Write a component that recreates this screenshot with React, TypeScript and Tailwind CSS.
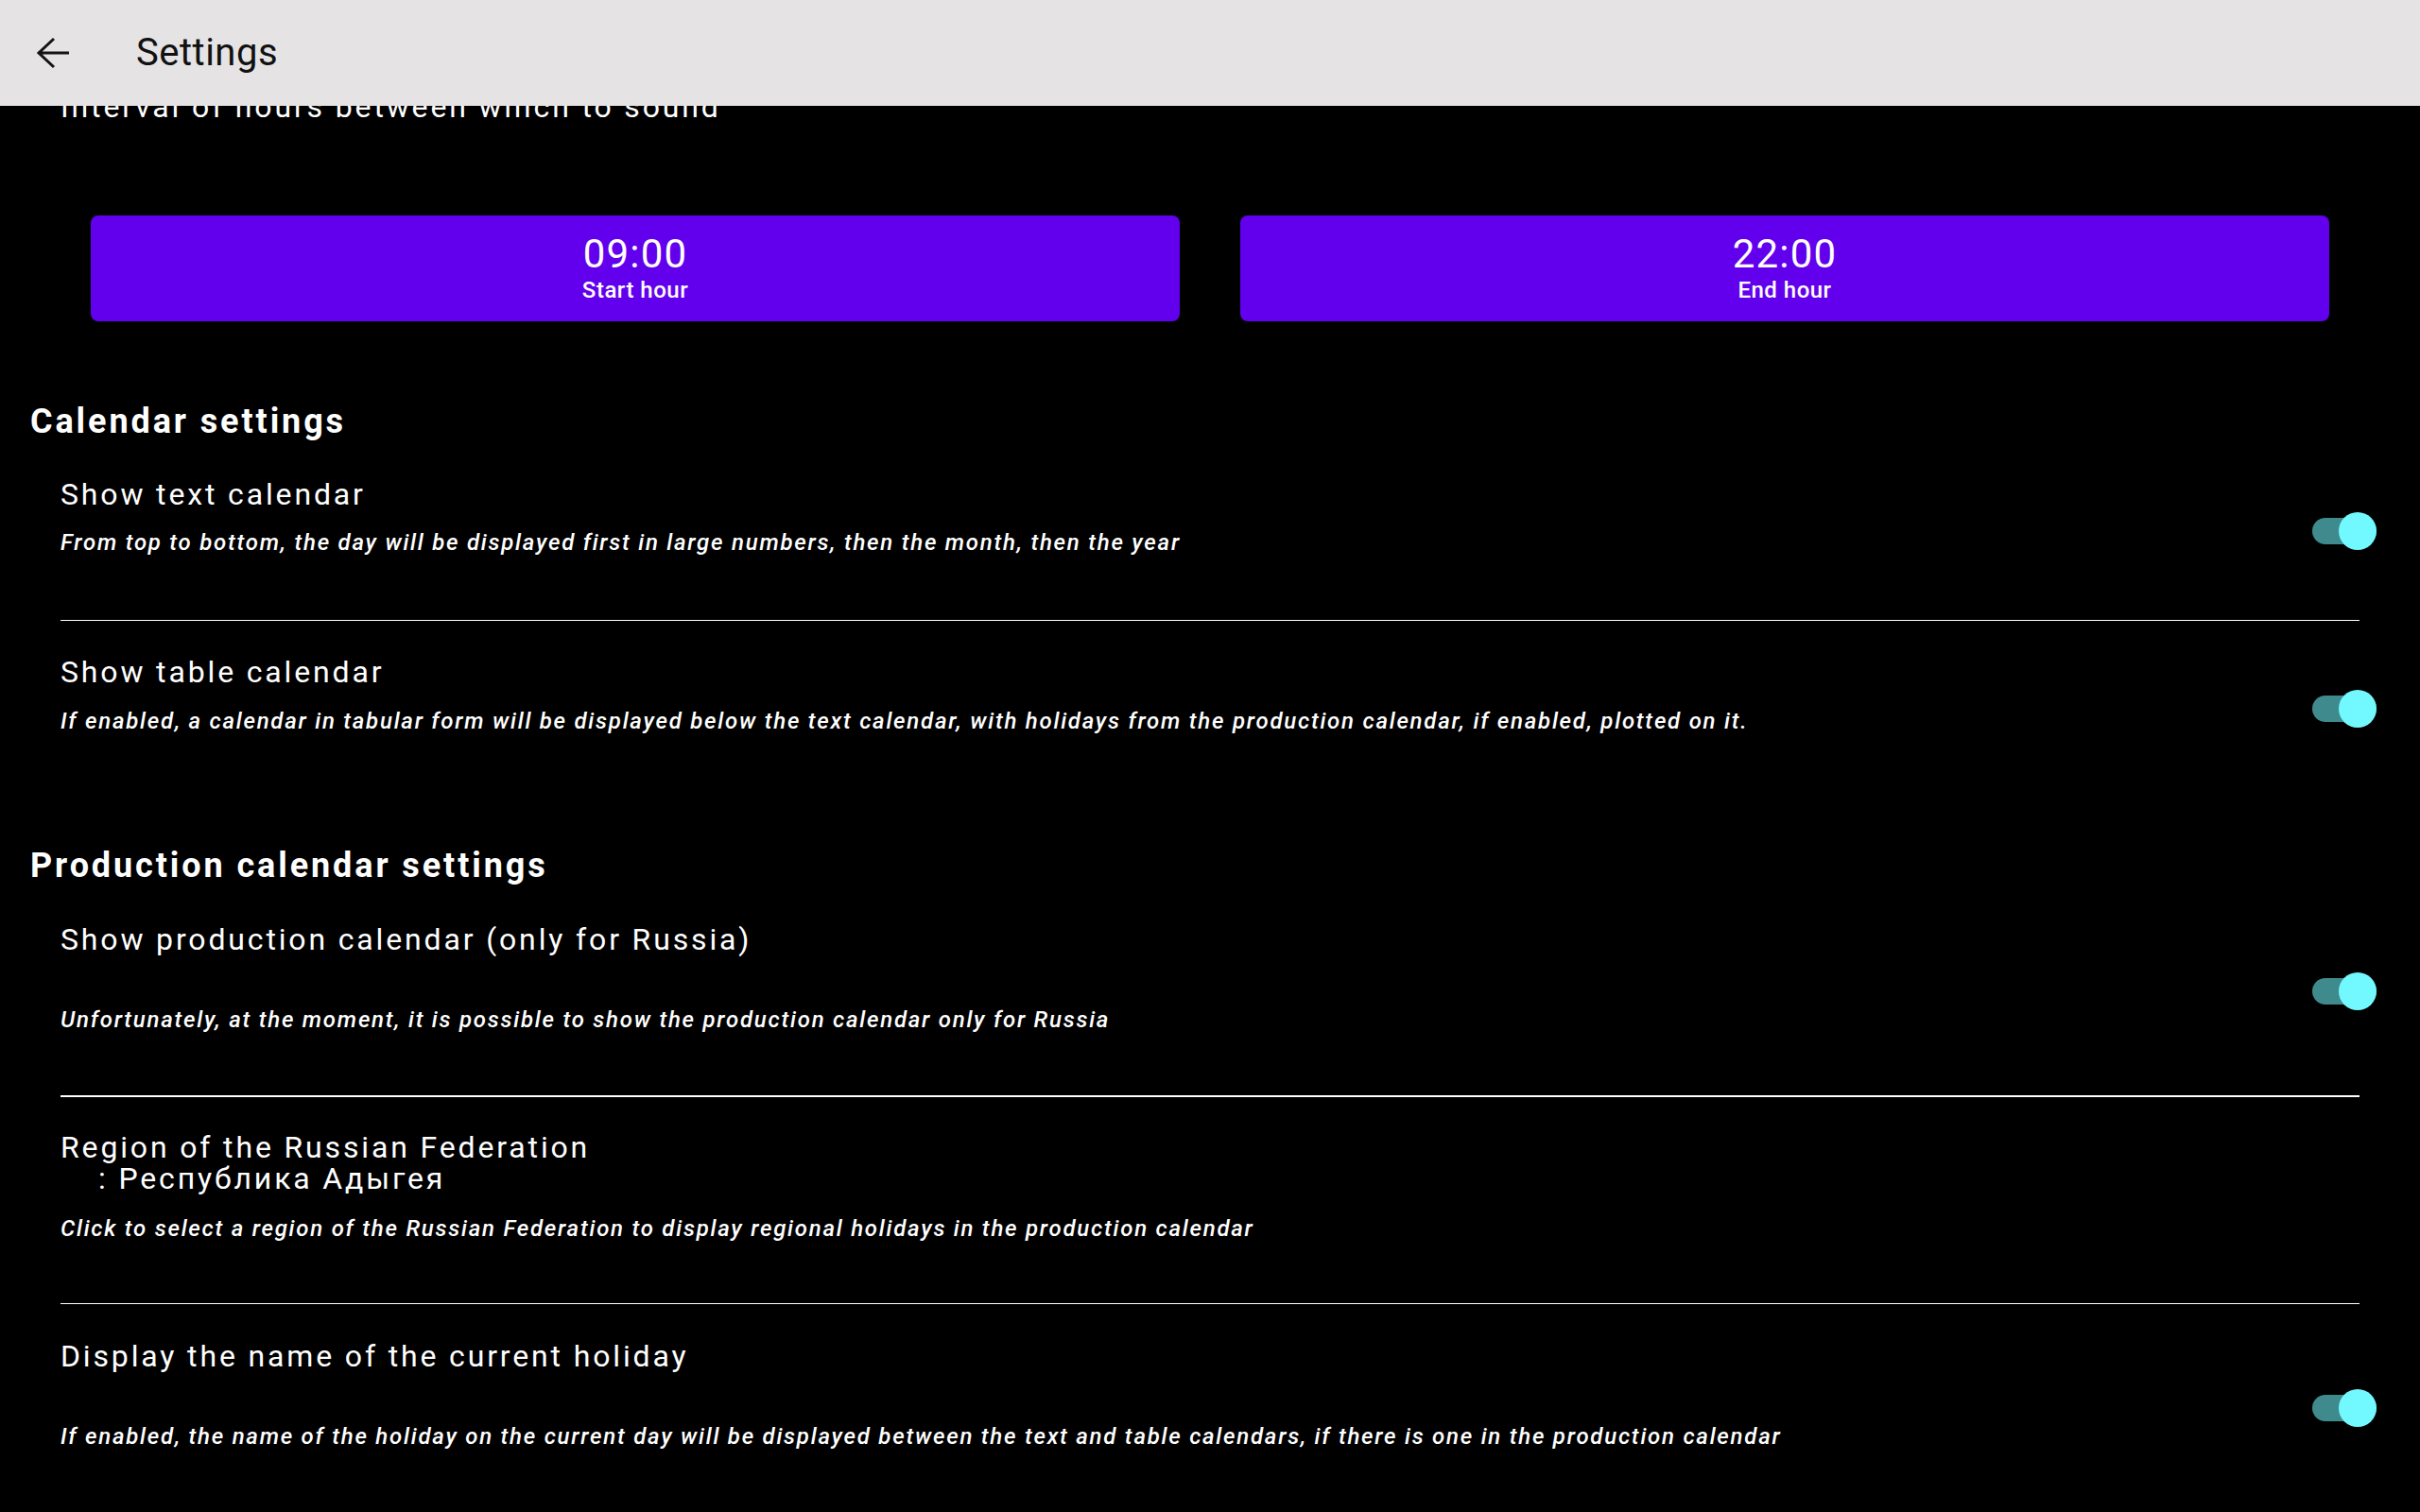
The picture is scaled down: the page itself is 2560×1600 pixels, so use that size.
import React from "react";

function Toggle() {
  return (
    <div className="relative w-[68px] h-[40px] shrink-0">
      <div className="absolute left-0 top-[6px] w-[68px] h-[28px] rounded-full bg-[#3f8a8c]"></div>
      <div className="absolute right-0 top-0 w-[40px] h-[40px] rounded-full bg-[#72f9ff]"></div>
    </div>
  );
}

function Divider() {
  return <div className="mx-[64px] h-[2px] bg-white"></div>;
}

type RowProps = {
  title: React.ReactNode;
  desc: string;
  pt: string;
  gap: string;
  pb: string;
  toggle?: boolean;
};

function Row({ title, desc, pt, gap, pb, toggle = true }: RowProps) {
  return (
    <div className="flex items-center pl-[64px] pr-[46px]">
      <div className={`flex-1 flex flex-col ${pt} ${pb}`}>
        <div className="text-[32px] leading-[40px] tracking-[2.85px] text-white">{title}</div>
        <div className={`text-[24px] leading-[32px] tracking-[1.76px] italic font-medium text-white ${gap}`}>{desc}</div>
      </div>
      {toggle && <Toggle />}
    </div>
  );
}

export default function App() {
  return (
    <div className="w-[2560px] h-[1600px] flex flex-col bg-black overflow-hidden" style={{ fontFamily: "Roboto, 'Noto Sans', sans-serif" }}>
      {/* Toolbar */}
      <div className="relative z-10 h-[112px] shrink-0 flex items-center bg-[#e5e3e4]">
        <svg width="36" height="34" viewBox="0 0 36 34" className="ml-[38px]">
          <path d="M35 17H3M19 2L3 17l16 15" fill="none" stroke="#141414" strokeWidth="3" />
        </svg>
        <div className="ml-[70px] text-[40px] tracking-[0.5px] text-[#111] leading-none">Settings</div>
      </div>

      {/* Scrolled content */}
      <div className="flex-1 flex flex-col overflow-hidden">
        <div className="-mt-[19px] pl-[64px] text-[32px] leading-[40px] tracking-[2.85px] text-white">Interval of hours between which to sound</div>

        <div className="mt-[95px] px-[96px] flex gap-[64px]">
          <div className="flex-1 h-[112px] rounded-[8px] bg-[#6200ee] flex flex-col items-center justify-center text-white">
            <div className="text-[42px] leading-[48px] tracking-[1.2px] -mt-[2px]">09:00</div>
            <div className="text-[24px] leading-[28px] font-medium tracking-[0.5px]">Start hour</div>
          </div>
          <div className="flex-1 h-[112px] rounded-[8px] bg-[#6200ee] flex flex-col items-center justify-center text-white">
            <div className="text-[42px] leading-[48px] tracking-[1.2px] -mt-[2px]">22:00</div>
            <div className="text-[24px] leading-[28px] font-medium tracking-[0.5px]">End hour</div>
          </div>
        </div>

        <div className="mt-[84px] pl-[32px] text-[36px] leading-[44px] tracking-[2.9px] font-bold text-white">Calendar settings</div>

        <Row
          title="Show text calendar"
          desc="From top to bottom, the day will be displayed first in large numbers, then the month, then the year"
          pt="pt-[35px]"
          gap="mt-[15px]"
          pb="pb-[66px]"
        />
        <Divider />
        <Row
          title="Show table calendar"
          desc="If enabled, a calendar in tabular form will be displayed below the text calendar, with holidays from the production calendar, if enabled, plotted on it."
          pt="pt-[34px]"
          gap="mt-[16px]"
          pb="pb-[64px]"
        />

        <div className="mt-[51px] pl-[32px] text-[36px] leading-[44px] tracking-[2.9px] font-bold text-white">Production calendar settings</div>

        <Row
          title="Show production calendar (only for Russia)"
          desc="Unfortunately, at the moment, it is possible to show the production calendar only for Russia"
          pt="pt-[36px]"
          gap="mt-[49px]"
          pb="pb-[64px]"
        />
        <Divider />
        <div className="flex pl-[64px] pr-[46px]">
          <div className="flex-1 flex flex-col pt-[37px] pb-[63px]">
            <div className="text-[32px] leading-[33px] tracking-[2.85px] text-white">
              <div>Region of the Russian Federation</div>
              <div className="pl-[40px]">: Республика Адыгея</div>
            </div>
            <div className="mt-[20px] text-[24px] leading-[32px] tracking-[1.76px] italic font-medium text-white">
              Click to select a region of the Russian Federation to display regional holidays in the production calendar
            </div>
          </div>
        </div>
        <Divider />
        <Row
          title="Display the name of the current holiday"
          desc="If enabled, the name of the holiday on the current day will be displayed between the text and table calendars, if there is one in the production calendar"
          pt="pt-[35px]"
          gap="mt-[49px]"
          pb="pb-[64px]"
        />
      </div>
    </div>
  );
}
